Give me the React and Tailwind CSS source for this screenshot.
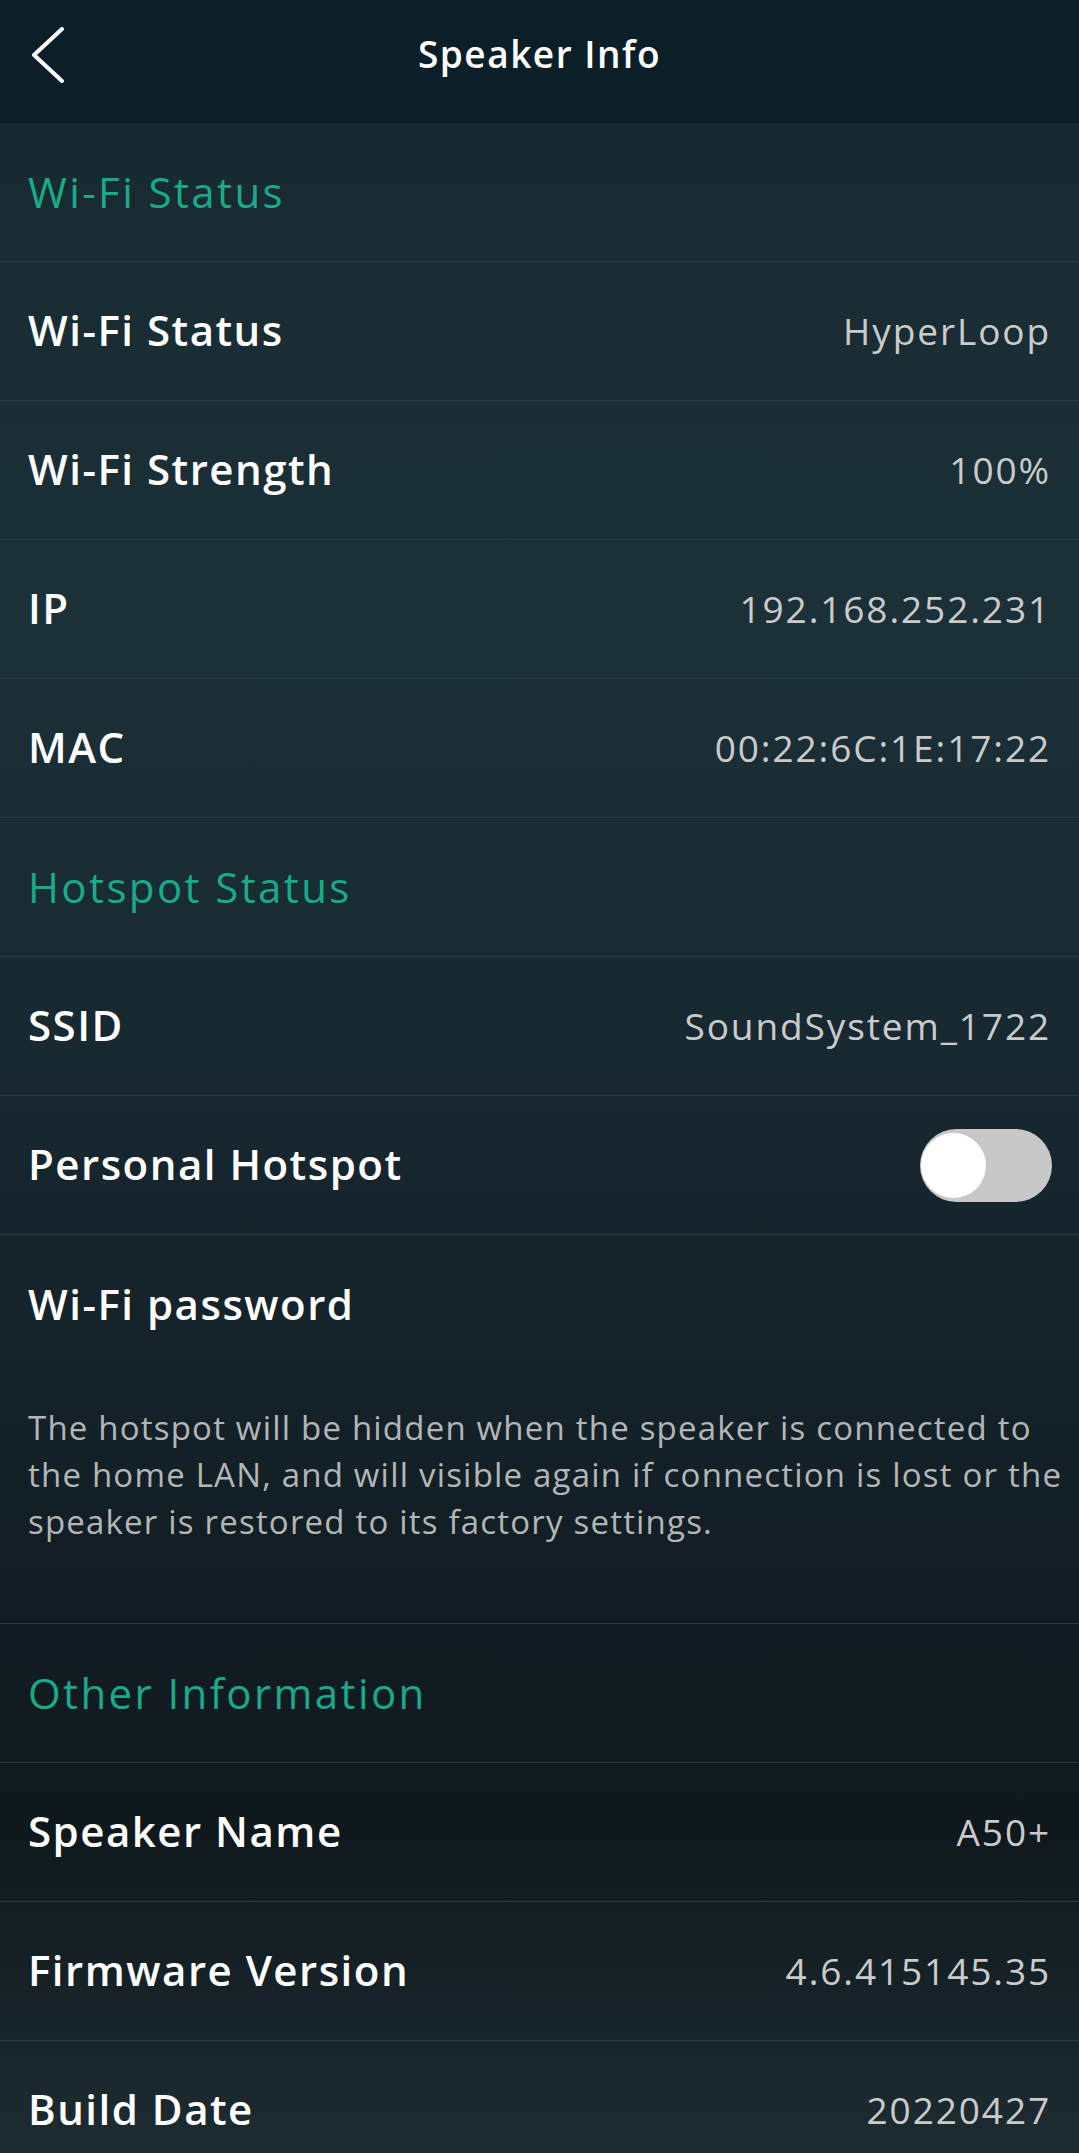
import React from 'react'

const wifiRows = [
	{ label: 'Wi-Fi Status', value: 'HyperLoop' },
	{ label: 'Wi-Fi Strength', value: '100%' },
	{ label: 'IP', value: '192.168.252.231' },
	{ label: 'MAC', value: '00:22:6C:1E:17:22' },
]

const otherRows = [
	{ label: 'Speaker Name', value: 'A50+' },
	{ label: 'Firmware Version', value: '4.6.415145.35' },
	{ label: 'Build Date', value: '20220427' },
]

const SectionTitle = ({ children }) => (
	<div className="h-[139px] flex items-center px-[28px] border-b border-[#2b3c43]">
		<span className="text-[42px] font-medium tracking-[2.4px] text-[#17ab89] leading-none">{children}</span>
	</div>
)

const InfoRow = ({ label, value, children }) => (
	<div className="h-[139px] flex items-center justify-between px-[28px] border-b border-[#2b3c43]">
		<span className="text-[42px] font-semibold tracking-[1.5px] text-white leading-none mt-[-2px]">{label}</span>
		{value && <span className="text-[37px] tracking-[1.9px] text-[#cacbcc] leading-none mt-[-2px]">{value}</span>}
		{children}
	</div>
)

const Toggle = () => (
	// off state, knob on the left
	<div className="w-[132px] h-[73px] rounded-full bg-[#c8c8c8] flex items-center pl-[1px] mr-[-1px]">
		<div className="w-[65px] h-[65px] rounded-full bg-white" />
	</div>
)

const App = () => {
	return (
		<div
			className="w-[1079px] min-h-[2153px] overflow-hidden bg-[#0f181d]"
			style={{ fontFamily: '"Open Sans", Lato, sans-serif' }}
		>
			<header className="h-[123px] bg-[#0c1f28] relative flex items-center justify-center">
				<button className="absolute left-[28px] top-[27px] w-[40px] h-[56px] flex items-center justify-center">
					<svg width="36" height="56" viewBox="0 0 36 56" fill="none">
						<path d="M32 2 L4 28 L32 54" stroke="white" strokeWidth="4" strokeLinecap="round" strokeLinejoin="round" />
					</svg>
				</button>
				<h1 className="text-[37px] font-semibold tracking-[1.5px] text-white leading-none mb-[16px]">Speaker Info</h1>
			</header>

			<div className="bg-[linear-gradient(180deg,#182a31_0%,#1c3038_24%,#17262e_51%,#0f181d_83%,#1f2e33_100%)]">
				<SectionTitle>Wi-Fi Status</SectionTitle>
				{wifiRows.map((r) => (
					<InfoRow key={r.label} label={r.label} value={r.value} />
				))}

				<SectionTitle>Hotspot Status</SectionTitle>
				<InfoRow label="SSID" value="SoundSystem_1722" />
				<InfoRow label="Personal Hotspot">
					<Toggle />
				</InfoRow>

				<div className="border-b border-[#2b3c43]">
					<div className="h-[139px] flex items-center px-[28px]">
						<span className="text-[42px] font-semibold tracking-[1.5px] text-white leading-none mt-[-2px]">Wi-Fi password</span>
					</div>
					<p className="pl-[28px] pr-[6px] pt-[30px] pb-[78px] text-[33px] tracking-[1.2px] leading-[47px] text-[#b3b6b8] whitespace-nowrap">
						The hotspot will be hidden when the speaker is connected to
						<br />
						the home LAN, and will visible again if connection is lost or the
						<br />
						speaker is restored to its factory settings.
					</p>
				</div>

				<SectionTitle>Other Information</SectionTitle>
				{otherRows.map((r) => (
					<InfoRow key={r.label} label={r.label} value={r.value} />
				))}
			</div>
		</div>
	)
}

export default App
